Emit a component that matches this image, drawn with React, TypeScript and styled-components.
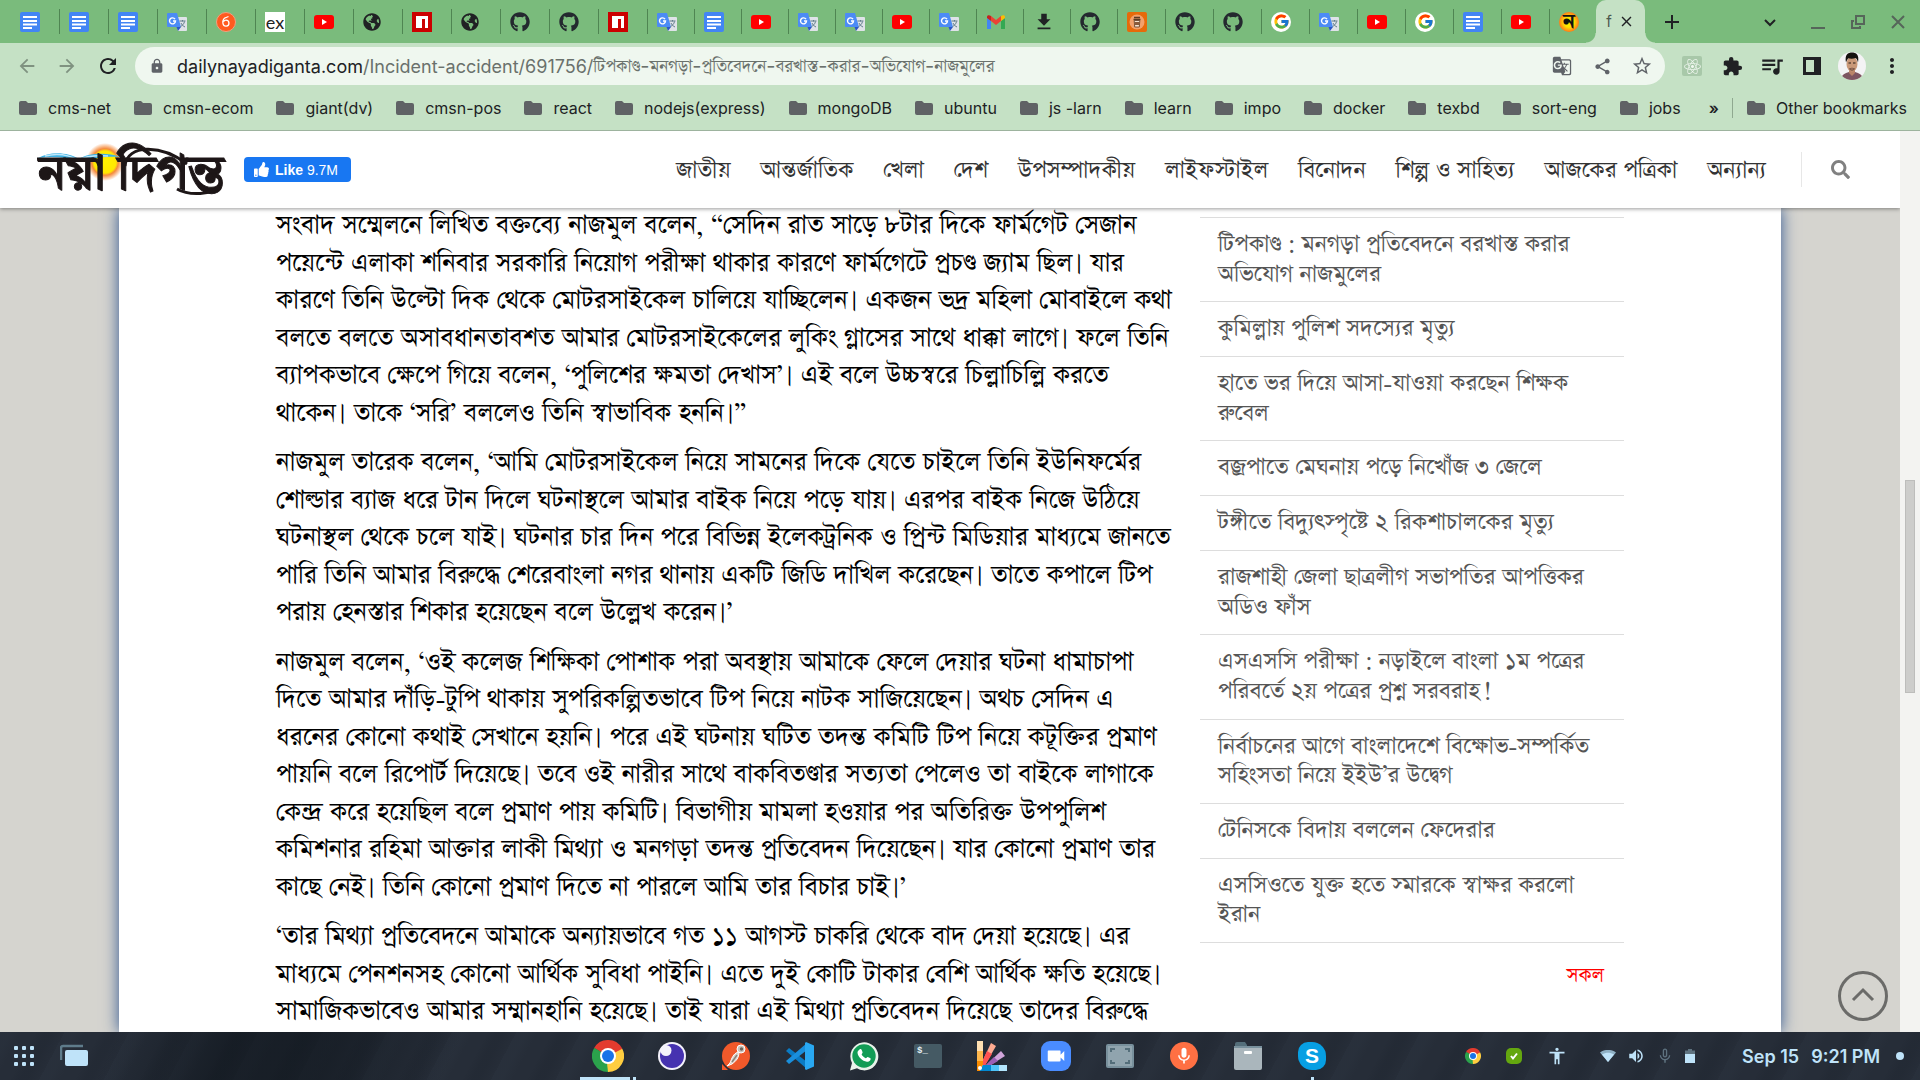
import React from 'react';
import styled, { createGlobalStyle, css } from 'styled-components';
import { FaGithub, FaGlobeAmericas, FaReact, FaSearch, FaThumbsUp } from 'react-icons/fa';
import { FcGoogle } from 'react-icons/fc';
import {
  MdAccessibility,
  MdArrowBack,
  MdArrowForward,
  MdClose,
  MdExtension,
  MdFileDownload,
  MdGTranslate,
  MdLock,
  MdMic,
  MdMicNone,
  MdMoreVert,
  MdQueueMusic,
  MdRefresh,
  MdShare,
  MdStarBorder,
  MdVideocam,
  MdVolumeUp,
} from 'react-icons/md';

const ui = `Inter, "Liberation Sans", sans-serif`;
const bangla = `FreeSerif, "Noto Serif Bengali", "Noto Sans Bengali", "Liberation Serif", serif`;

const GlobalStyle = createGlobalStyle`
  * { box-sizing: border-box; }
  body { margin: 0; background: #d5d4cf; overflow: hidden; }
  button { border: 0; padding: 0; background: none; color: inherit; font: inherit; cursor: pointer; }
  a { color: inherit; text-decoration: none; }
  svg { display: block; flex: none; }
`;

const Desktop = styled.div`
  display: flex;
  flex-direction: column;
  height: 100vh;
  font-family: ${ui};
`;

/* ---------- browser tabs ---------- */

const TabStrip = styled.div`
  display: flex;
  align-items: stretch;
  height: 43px;
  flex: none;
  padding-left: 11px;
  background: #7abb7c;
`;

const Tab = styled.button<{ $width: number; $last?: boolean }>`
  display: flex;
  align-items: center;
  flex: 0 1 ${(p) => p.$width}px;
  min-width: 0;
  padding-left: 9px;
  ${(p) =>
    !p.$last &&
    css`
      background: linear-gradient(#4f8552, #4f8552) right center / 1px 25px no-repeat;
    `}
`;

const ActiveTab = styled.div`
  position: relative;
  display: flex;
  align-items: center;
  justify-content: center;
  gap: 6px;
  width: 49px;
  flex: none;
  border-radius: 10px 10px 0 0;
  background: #c5e1c5;
  color: #202124;
  font-size: 15px;

  &::before,
  &::after {
    content: '';
    position: absolute;
    bottom: 0;
    width: 10px;
    height: 10px;
  }
  &::before {
    right: 100%;
    background: radial-gradient(circle at 0 0, transparent 9px, #c5e1c5 10px);
  }
  &::after {
    left: 100%;
    background: radial-gradient(circle at 100% 0, transparent 9px, #c5e1c5 10px);
  }
`;

const TabTitle = styled.span`
  color: #4d5a4f;
`;

const NewTab = styled.button`
  display: flex;
  align-items: center;
  margin-left: 18px;
`;

const WindowControls = styled.div`
  display: flex;
  align-items: center;
  gap: 24px;
  margin-left: auto;
  padding-right: 14px;
`;

const WindowButton = styled.button<{ $dark?: boolean }>`
  display: flex;
  margin-right: ${(p) => (p.$dark ? '8px' : '0')};
  color: ${(p) => (p.$dark ? '#202124' : '#56655a')};
`;

/* ---------- toolbar ---------- */

const Toolbar = styled.div`
  display: flex;
  align-items: center;
  flex: none;
  height: 47px;
  padding: 4px 8px 5px 16px;
  background: #c5e1c5;
  color: #202124;
`;

const NavButtons = styled.div`
  display: flex;
  align-items: center;
  gap: 18px;
  width: 119px;
`;

const IconButton = styled.button<{ $dim?: boolean }>`
  display: flex;
  color: ${(p) => (p.$dim ? '#7f9280' : 'inherit')};
`;

const AddressBar = styled.div`
  display: flex;
  align-items: center;
  flex: 1;
  min-width: 0;
  height: 38px;
  padding: 0 3px 0 14px;
  border-radius: 19px;
  background: #eff7ef;
  color: #5f6368;
`;

const Address = styled.div`
  flex: 1;
  min-width: 0;
  margin-left: 12px;
  overflow: hidden;
  white-space: nowrap;
  font-size: 18px;
  line-height: 36px;
  font-family: Inter, ${bangla};
  color: #6a716c;

  b {
    font-weight: 400;
    color: #202124;
  }
`;

const Slug = styled.span`
  font-size: 20px;
`;

const IconCells = styled.div`
  display: grid;
  grid-auto-flow: column;
  grid-auto-columns: 40px;
  place-items: center;
`;

const Extensions = styled(IconCells)`
  margin-left: 7px;
`;

const ReactBadge = styled.span`
  display: grid;
  place-items: center;
  width: 20px;
  height: 20px;
  border-radius: 2px;
  background: #a8c8a9;
  color: #eff7ef;
`;

/* ---------- bookmarks ---------- */

const Bookmarks = styled.nav`
  display: flex;
  align-items: center;
  flex: none;
  height: 41px;
  padding: 0 13px 4px 19px;
  border-bottom: 1px solid #9db39e;
  background: #c5e1c5;
  color: #202124;
  font-size: 16px;
  line-height: 20px;
  white-space: nowrap;
`;

const BookmarkList = styled.div`
  display: flex;
  gap: 23px;
  flex: 1;
  min-width: 0;
  overflow: hidden;
`;

const Bookmark = styled.a`
  display: flex;
  align-items: center;
  gap: 11px;

  svg {
    color: #5f6265;
  }
`;

const Overflow = styled.button`
  margin-right: 13px;
  font-weight: 600;
`;

const OtherBookmarks = styled.div`
  padding-left: 14px;
  border-left: 1px solid #8fa890;
`;

/* ---------- web page ---------- */

const Viewport = styled.div`
  display: flex;
  flex: 1;
  min-height: 0;
`;

const Page = styled.div`
  position: relative;
  display: flex;
  flex-direction: column;
  flex: 1;
  min-width: 0;
  overflow: hidden;
  background: #d5d4cf;
  font-family: ${bangla};
`;

const SiteHeader = styled.header`
  position: relative;
  z-index: 1;
  display: flex;
  align-items: center;
  flex: none;
  height: 77px;
  padding: 0 50px 0 37px;
  background: #fff;
  box-shadow: 0 1px 4px rgba(0, 0, 0, 0.4);
`;

const LikeButton = styled.button`
  display: flex;
  align-items: center;
  gap: 6px;
  height: 25px;
  margin-left: 17px;
  padding: 0 13px 0 10px;
  border-radius: 4px;
  background: #1877f2;
  color: #fff;
  font-family: 'Liberation Sans', Arial, sans-serif;
  font-size: 14px;
`;

const SiteNav = styled.nav`
  display: flex;
  gap: 30px;
  margin-left: auto;
  padding-top: 3px;
  color: #333;
  font-size: 27px;
  line-height: 32px;
  white-space: nowrap;
`;

const SearchBox = styled.div`
  margin-left: 35px;
  padding: 8px 0 8px 29px;
  border-left: 1px solid #e7e7e7;
  color: #808080;
`;

const Sheet = styled.div`
  flex: 1;
  min-height: 0;
  width: 87.5%;
  margin: 0 auto;
  background: #fff;
  box-shadow: 0 0 15px #2f5590;
`;

const Columns = styled.div`
  display: grid;
  grid-template-columns: minmax(0, 2fr) minmax(0, 1fr);
  max-width: 1380px;
  margin: 0 auto;
`;

const Article = styled.article`
  padding: 0 16px;
  color: #000;
  font-size: 30px;
  line-height: 1.25;
  white-space: nowrap;

  p {
    margin: 0 0 12px;
  }
`;

const Sidebar = styled.aside`
  padding: 9px 16px 0 20px;
`;

const Headlines = styled.ul`
  margin: 0;
  padding: 0;
  list-style: none;
  border-top: 1px solid #ddd;
  color: #555;
  font-size: 27px;
  line-height: 1.1;
  white-space: nowrap;
`;

const Headline = styled.li`
  padding: 12px 18px;
  border-bottom: 1px solid #ddd;

  a {
    display: block;
  }
`;

const AllLink = styled.a`
  display: block;
  padding: 18px 20px;
  color: #f00;
  font-size: 23px;
  line-height: 32px;
  text-align: right;
`;

const BackToTop = styled.button`
  position: absolute;
  right: 12px;
  bottom: 11px;
  display: grid;
  place-items: center;
  width: 50px;
  height: 50px;
  border: 3px solid #6b6b69;
  border-radius: 50%;
  color: #6b6b69;
`;

const Scrollbar = styled.div`
  flex: none;
  width: 20px;
  padding: 349px 5px 0;
  background: #f3f3f1;
`;

const Thumb = styled.div`
  height: 213px;
  border: 1px solid #bdbdbb;
  background: #cdcdcb;
`;

/* ---------- desktop panel ---------- */

const Panel = styled.footer`
  display: grid;
  grid-template-columns: 1fr auto 1fr;
  align-items: center;
  flex: none;
  height: 48px;
  padding: 0 12px;
  background:
    linear-gradient(115deg, transparent 6%, rgba(10, 16, 22, 0.5) 12%, rgba(10, 16, 22, 0.5) 17%, transparent 24%),
    repeating-linear-gradient(118deg, rgba(60, 72, 86, 0.1) 0 9px, transparent 19px 31px, rgba(12, 18, 26, 0.1) 40px 46px, transparent 57px),
    #262d38;
  color: #bfe3f9;
`;

const PanelGroup = styled.div<{ $gap: number; $end?: boolean }>`
  display: flex;
  align-items: center;
  gap: ${(p) => p.$gap}px;
  justify-content: ${(p) => (p.$end ? 'flex-end' : 'flex-start')};
`;

const Launcher = styled.button<{ $mark?: 'bar' | 'dot' }>`
  display: grid;
  place-items: center;
  width: 64px;
  height: 48px;
  ${(p) =>
    p.$mark === 'bar' &&
    css`
      background:
        linear-gradient(#bfe3f9, #bfe3f9) 4px 100% / 50px 3px no-repeat,
        linear-gradient(#bfe3f9, #bfe3f9) 57px 100% / 3px 3px no-repeat;
    `}
  ${(p) =>
    p.$mark === 'dot' &&
    css`
      background: linear-gradient(#bfe3f9, #bfe3f9) center 100% / 3px 3px no-repeat;
    `}
`;

const Clock = styled.time`
  display: flex;
  gap: 12px;
  font-size: 18px;
  font-weight: 600;
  white-space: nowrap;
`;

const Notice = styled.span`
  width: 8px;
  height: 8px;
  margin: 0 4px 0 16px;
  border-radius: 50%;
  background: #bfe3f9;
`;

const StatusIcons = styled.span`
  display: flex;
  align-items: center;
  gap: 11px;
  margin: 0 47px 0 33px;
`;

const TrayApps = styled.span`
  display: flex;
  align-items: center;
  gap: 25px;
`;

/* ---------- drawings ---------- */

const Docs = () => (
  <svg width="20" height="20" viewBox="0 0 20 20">
    <rect width="20" height="20" rx="2" fill="#4285f4" />
    <path d="M3 5h14M3 9h14M3 12.500h14M3 16h9" stroke="#fff" strokeWidth="1.900" />
  </svg>
);

const Translate = () => (
  <svg width="20" height="20" viewBox="0 0 20 20">
    <path d="M8 5h11a1 1 0 0 1 1 1v12a1 1 0 0 1-1 1h-8z" fill="#dfe3e8" />
    <path d="M1 1h9l4 14H1a1 1 0 0 1-1-1V2a1 1 0 0 1 1-1z" fill="#4c8bf5" />
    <path d="M9.500 15H14l-3 4z" fill="#2a56c6" />
    <path d="M8 7.200A3 3 0 1 0 8.500 9H6" fill="none" stroke="#fff" strokeWidth="1.400" />
    <path d="M12.500 9h6M15.500 8v1.500M17.500 9.500c-.5 2.500-2 4-4 5M14 11c.8 1.800 2 3 4 4" fill="none" stroke="#607d8b" strokeWidth="1" />
  </svg>
);

const YouTube = () => (
  <svg width="20" height="20" viewBox="0 0 20 20">
    <rect y="3" width="20" height="14" rx="3" fill="#f00" />
    <path d="M8 7v6l5-3z" fill="#fff" />
  </svg>
);

const OrangeSix = () => (
  <svg width="20" height="20" viewBox="0 0 20 20">
    <circle cx="10" cy="10" r="9.500" fill="#ff5a1f" stroke="#f0a080" />
    <path d="M9.500 5.500C7 7 6.500 9.500 7 11.700a3 3 0 1 0 3-3.500c-1 0-2 .6-2.500 1.500M9 6l3.500-1.500" fill="none" stroke="#fff" strokeWidth="1.300" />
  </svg>
);

const ExpressBox = styled.span`
  display: grid;
  place-items: center;
  width: 20px;
  height: 20px;
  background: #fff;
  color: #222;
  font: 400 18px/18px Lato, sans-serif;
`;

const Npm = () => (
  <svg width="20" height="20" viewBox="0 0 20 20">
    <path d="M0 0h20v20H0z" fill="#c00" />
    <path d="M4 4h12v12h-3V7h-3v9H4z" fill="#fff" />
  </svg>
);

const Gmail = () => (
  <svg width="20" height="20" viewBox="0 0 20 20">
    <path d="M1 17V6l4 3v8z" fill="#4285f4" />
    <path d="M15 17V9l4-3v11z" fill="#34a853" />
    <path d="M5 9V4l5 4 5-4v5l-5 4z" fill="#ea4335" />
    <path d="M1 6V5c0-2 2-2.500 4-1v5z" fill="#c5221f" />
    <path d="M19 6V5c0-2-2-2.500-4-1v5z" fill="#fbbc04" />
  </svg>
);

const Coffee = () => (
  <svg width="20" height="20" viewBox="0 0 20 20">
    <rect width="20" height="20" rx="2" fill="#e66a0a" />
    <circle cx="10" cy="10" r="7.500" fill="#f3a06b" />
    <path d="M7 5.500h6M6.500 7.500h7" stroke="#5b3a24" strokeWidth="1.300" />
    <path d="M7.200 8.500h5.600L12.300 15H7.700z" fill="#f6e3d2" stroke="#5b3a24" strokeWidth=".8" />
    <path d="M7.600 10h4.800v3H7.600z" fill="#8b5a3a" />
  </svg>
);

const GoogleDisc = styled.span`
  display: grid;
  place-items: center;
  width: 20px;
  height: 20px;
  border-radius: 50%;
  background: #fff;
`;

const SiteIcon = styled.span`
  display: grid;
  place-items: center;
  width: 20px;
  height: 20px;
  border-radius: 50%;
  background: radial-gradient(circle, #ffe600 35%, #ff7a1a 70%);
  color: #111;
  font: 900 20px/20px ${bangla};
`;

const Logo = () => (
  <svg width="190" height="76" viewBox="0 0 190 76" role="img" aria-label="নয়া দিগন্ত">
    <defs>
      <radialGradient id="sun">
        <stop offset="0" stopColor="#fff200" />
        <stop offset="0.580" stopColor="#ffe800" />
        <stop offset="0.700" stopColor="#f58a3c" />
        <stop offset="1" stopColor="#f58a3c" stopOpacity="0" />
      </radialGradient>
    </defs>
    <circle cx="68" cy="30" r="19" fill="url(#sun)" />
    <path d="M1 26c12-7 30-6 41 1 9-6 27-7 42-2-14-1-31 1-42 5-12-5-26-6-41-4z" fill="#3fb2e3" />
    <path d="M8 24c12-3 24-1 33 4 8-4 18-5 30-4" fill="none" stroke="#bfe8fa" strokeWidth="1.500" />
    <text
      x="1"
      y="57"
      fontSize="49"
      fontWeight="700"
      fontFamily={bangla}
      fill="#1d1617"
      stroke="#1d1617"
      strokeWidth="1"
    >
      নয়া দিগন্ত
    </text>
    <path d="M88 34C90 12 124 12 150 32" fill="none" stroke="#1d1617" strokeWidth="3" />
    <path d="M140 57c12 7 36 6 42-3" fill="none" stroke="#1d1617" strokeWidth="3" />
  </svg>
);

const Avatar = () => (
  <svg width="28" height="28" viewBox="0 0 28 28">
    <clipPath id="face">
      <circle cx="14" cy="14" r="14" />
    </clipPath>
    <g clipPath="url(#face)">
      <path d="M0 0h28v28H0z" fill="#f4f3f5" />
      <path d="M3 28c0-5 4-7 8-8h6c4 1 8 3 8 8z" fill="#7d5561" />
      <path d="M11 17h6v4l-3 3-3-3z" fill="#b98468" />
      <ellipse cx="14" cy="12" rx="5.500" ry="7.500" fill="#c99878" />
      <path d="M8 10.500c-1.500-8 2-10 6-10s7.500 2 6 10c-.8-3-1.500-4-2.500-4.500-2 .8-5 .8-7 .3-1 .7-1.500 1.700-2.500 4.200z" fill="#15120f" />
      <path d="M11 16.500c1 3 5 3 6 0-1.500-1-4.500-1-6 0z" fill="#6d4e40" />
      <path d="M12.500 17h3" stroke="#b9826a" />
      <path d="M10.500 11h2.500M15 11h2.500" stroke="#2a1c16" />
    </g>
  </svg>
);

const AppGrid = () => (
  <svg width="24" height="24" viewBox="0 0 24 24" fill="#bfe3f9">
    {[2, 10, 18].map((y) => [2, 10, 18].map((x) => <rect key={`${x}-${y}`} x={x} y={y} width="4" height="4" rx="1" />))}
  </svg>
);

const Windows = () => (
  <svg width="28" height="24" viewBox="0 0 28 24">
    <path d="M1 16V4q0-2 2-2h20" fill="none" stroke="#5f7c8b" strokeWidth="2.500" />
    <rect x="5" y="6" width="23" height="16" rx="2" fill="#bfe3f9" />
  </svg>
);

const Chrome = ({ size }: { size: number }) => (
  <svg width={size} height={size} viewBox="0 0 32 32">
    <path d="M16 16 2.140 8A16 16 0 0 1 29.860 8z" fill="#e33b2e" />
    <path d="M16 16 29.860 8A16 16 0 0 1 16 32z" fill="#ffcd40" />
    <path d="M16 16v16A16 16 0 0 1 2.140 8z" fill="#2ba24c" />
    <path d="M16 8h13.900v1L16 16z" fill="#e33b2e" />
    <path d="m9 20-6.900-12L9 12z" fill="#2ba24c" />
    <path d="m23 20-7 12-1-9z" fill="#ffcd40" />
    <circle cx="16" cy="16" r="8" fill="#fff" />
    <circle cx="16" cy="16" r="6" fill="#1a73e8" />
  </svg>
);

const Insomnia = () => (
  <svg width="28" height="28" viewBox="0 0 28 28">
    <circle cx="14" cy="14" r="14" fill="#f4f2fb" />
    <circle cx="14" cy="14" r="12" fill="#4632b0" />
    <circle cx="8" cy="8.500" r="5.500" fill="#f4f2fb" />
  </svg>
);

const Postman = () => (
  <svg width="30" height="30" viewBox="0 0 30 30">
    <circle cx="15" cy="15" r="14" fill="#f1592a" />
    <path d="M1 29v-6l6 6z" fill="#f1592a" />
    <circle cx="20" cy="8" r="4" fill="#c9c4bd" stroke="#fff" />
    <circle cx="20.500" cy="8" r="1.700" fill="#6b6259" />
    <path d="M17 11c-5 2-6 6-8 11l-3 3 5-2c4-3 7-6 7-12z" fill="#d9d4cc" stroke="#fff" />
    <path d="m16 14-5 7" stroke="#8b8278" strokeWidth="1.500" />
  </svg>
);

const Code = () => (
  <svg width="28" height="28" viewBox="0 0 28 28">
    <path d="m0 9 3-3 18 14v7z" fill="#0a7bc4" />
    <path d="m0 19 3 3L21 8V1z" fill="#1a8fdc" />
    <path d="m20 0 8 3.500v21L20 28l-1-1V1z" fill="#29a8f2" />
  </svg>
);

const WhatsApp = () => (
  <svg width="30" height="30" viewBox="0 0 30 30">
    <path d="M1 29.500 3 22A14 14 0 1 1 8 27.300z" fill="#e9f2ea" />
    <circle cx="15" cy="15" r="11.700" fill="#129c55" />
    <path
      d="M10.500 8.500c1-.7 1.800-.5 2.200.5l.9 2.200c.2.700-1 1.700-1 2.100.5 1.500 2.500 3.300 4.200 3.900.5 0 1.300-1.500 2-1.300l2.200 1.100c.8.400.8 1 .4 2-.7 1.300-2.200 2-3.600 1.800-4.300-.6-9-5-9.300-9-.1-1.300.9-2.600 2-3.300z"
      fill="#fff"
    />
  </svg>
);

const Terminal = styled.span`
  width: 28px;
  height: 24px;
  padding: 3px;
  border-radius: 2px;
  background: #455a64;
  color: #e3eef3;
  font: bold 9px/9px 'Liberation Mono', monospace;
  text-align: left;
`;

const Palette = () => (
  <svg width="30" height="30" viewBox="0 0 30 30">
    <path d="M0 0h6v30H0z" fill="#ffe0b2" />
    <path d="M0 10h6v20H0z" fill="#ffb74d" />
    <path d="M0 20h6v10H0z" fill="#fb8c00" />
    <path d="m14 2 5 3L7 26H6v-7z" fill="#ffab91" />
    <path d="m10 10 5 3L7 26H6v-7z" fill="#ff5252" />
    <path d="m24 10 4 5L9 27l-2-1z" fill="#d1a5da" />
    <path d="m17 16 4 4L9 27l-2-1z" fill="#9c5fb5" />
    <path d="M6 24h24v6H3z" fill="#b3e5fc" />
    <path d="M6 24h16v6H3z" fill="#4fc3f7" />
    <path d="M6 24h8v6H3z" fill="#0288d1" />
    <circle cx="3" cy="27" r="2" fill="#fff" />
  </svg>
);

const Tile = styled.span<{ $color: string; $round?: boolean }>`
  display: grid;
  place-items: center;
  width: ${(p) => (p.$round ? '28px' : '30px')};
  height: ${(p) => (p.$round ? '28px' : '30px')};
  border-radius: ${(p) => (p.$round ? '50%' : '9px')};
  background: ${(p) => p.$color};
  color: #fff;
`;

const Capture = () => (
  <svg width="28" height="24" viewBox="0 0 28 24">
    <rect width="28" height="24" rx="2" fill="#78909c" />
    <rect x="2" y="2" width="24" height="20" fill="#90a4ae" />
    <path d="M5 8V5h4M19 5h4v3M23 16v3h-4M9 19H5v-3" fill="none" stroke="#546e7a" strokeWidth="2" />
  </svg>
);

const Files = () => (
  <svg width="28" height="28" viewBox="0 0 28 28">
    <path d="M1 8V2q0-2 2-2h8l2 3v6z" fill="#546e7a" />
    <rect y="4" width="28" height="24" rx="2" fill="#aab6bc" />
    <path d="M0 4h28v2H0z" fill="#78909c" />
    <rect x="10" y="9" width="8" height="3" rx="1" fill="#fff" />
  </svg>
);

const SkypeMark = styled.span`
  display: grid;
  place-items: center;
  width: 28px;
  height: 28px;
  border-radius: 10px 14px 10px 14px;
  background: #079fe3;
  color: #fff;
  font: bold 21px/24px 'Liberation Sans', sans-serif;
`;

const GreenCheck = () => (
  <svg width="16" height="16" viewBox="0 0 16 16">
    <rect width="16" height="16" rx="5" fill="#64a70f" />
    <path d="m5 8 2 2.500 4-5" fill="none" stroke="#fff" strokeWidth="2" />
  </svg>
);

const Wifi = () => (
  <svg width="16" height="12" viewBox="0 0 16 12">
    <path d="M0 2.500C5-1 11-1 16 2.500L8 12z" fill="#8fb0c4" />
    <path d="M2 4.500c4-2.500 8-2.500 12 0L8 12z" fill="#bfe3f9" />
  </svg>
);

const Battery = () => (
  <svg width="10" height="14" viewBox="0 0 10 14">
    <path d="M3 0h4v1.500h3V14H0V1.500h3z" fill="#5f7380" />
    <path d="M0 5h10v9H0z" fill="#bfe3f9" />
  </svg>
);

const Folder = () => (
  <svg width="18" height="16" viewBox="0 0 18 16">
    <path d="M2 1h5l2 2h7q2 0 2 2v8q0 2-2 2H2q-2 0-2-2V3q0-2 2-2z" fill="currentColor" />
  </svg>
);

/* ---------- content ---------- */

const google = <GoogleDisc><FcGoogle size={17} /></GoogleDisc>;
const github = <FaGithub size={20} color="#24292f" />;
const globe = <FaGlobeAmericas size={18} color="#202124" />;

const tabs: [string, React.ReactNode][] = [
  ['Docs', <Docs />],
  ['Docs', <Docs />],
  ['Docs', <Docs />],
  ['Translate', <Translate />],
  ['Course', <OrangeSix />],
  ['Express', <ExpressBox>ex</ExpressBox>],
  ['YouTube', <YouTube />],
  ['Site', globe],
  ['npm', <Npm />],
  ['Site', globe],
  ['GitHub', github],
  ['GitHub', github],
  ['npm', <Npm />],
  ['Translate', <Translate />],
  ['Docs', <Docs />],
  ['YouTube', <YouTube />],
  ['Translate', <Translate />],
  ['Translate', <Translate />],
  ['YouTube', <YouTube />],
  ['Translate', <Translate />],
  ['Gmail', <Gmail />],
  ['Downloads', <MdFileDownload size={22} color="#202124" />],
  ['GitHub', github],
  ['Coffee', <Coffee />],
  ['GitHub', github],
  ['GitHub', github],
  ['Google', google],
  ['Translate', <Translate />],
  ['YouTube', <YouTube />],
  ['Google', google],
  ['Docs', <Docs />],
  ['YouTube', <YouTube />],
  ['Naya Diganta', <SiteIcon>ন</SiteIcon>],
];

const tabWidth = (i: number) => {
  if (i === tabs.length - 1) return 46;
  if (i < 13) return 49;
  return i < 23 ? 47 : 48;
};

const bookmarks = [
  'cms-net', 'cmsn-ecom', 'giant(dv)', 'cmsn-pos', 'react', 'nodejs(express)', 'mongoDB',
  'ubuntu', 'js -larn', 'learn', 'impo', 'docker', 'texbd', 'sort-eng', 'jobs',
];

const sections = [
  'জাতীয়', 'আন্তর্জাতিক', 'খেলা', 'দেশ', 'উপসম্পাদকীয়', 'লাইফস্টাইল', 'বিনোদন',
  'শিল্প ও সাহিত্য', 'আজকের পত্রিকা', 'অন্যান্য',
];

const paragraphs = [
  [
    'সংবাদ সম্মেলনে লিখিত বক্তব্যে নাজমুল বলেন, “সেদিন রাত সাড়ে ৮টার দিকে ফার্মগেট সেজান',
    'পয়েন্টে এলাকা শনিবার সরকারি নিয়োগ পরীক্ষা থাকার কারণে ফার্মগেটে প্রচণ্ড জ্যাম ছিল। যার',
    'কারণে তিনি উল্টো দিক থেকে মোটরসাইকেল চালিয়ে যাচ্ছিলেন। একজন ভদ্র মহিলা মোবাইলে কথা',
    'বলতে বলতে অসাবধানতাবশত আমার মোটরসাইকেলের লুকিং গ্লাসের সাথে ধাক্কা লাগে। ফলে তিনি',
    'ব্যাপকভাবে ক্ষেপে গিয়ে বলেন, ‘পুলিশের ক্ষমতা দেখাস’। এই বলে উচ্চস্বরে চিল্লাচিল্লি করতে',
    'থাকেন। তাকে ‘সরি’ বললেও তিনি স্বাভাবিক হননি।”',
  ],
  [
    'নাজমুল তারেক বলেন, ‘আমি মোটরসাইকেল নিয়ে সামনের দিকে যেতে চাইলে তিনি ইউনিফর্মের',
    'শোল্ডার ব্যাজ ধরে টান দিলে ঘটনাস্থলে আমার বাইক নিয়ে পড়ে যায়। এরপর বাইক নিজে উঠিয়ে',
    'ঘটনাস্থল থেকে চলে যাই। ঘটনার চার দিন পরে বিভিন্ন ইলেকট্রনিক ও প্রিন্ট মিডিয়ার মাধ্যমে জানতে',
    'পারি তিনি আমার বিরুদ্ধে শেরেবাংলা নগর থানায় একটি জিডি দাখিল করেছেন। তাতে কপালে টিপ',
    'পরায় হেনস্তার শিকার হয়েছেন বলে উল্লেখ করেন।’',
  ],
  [
    'নাজমুল বলেন, ‘ওই কলেজ শিক্ষিকা পোশাক পরা অবস্থায় আমাকে ফেলে দেয়ার ঘটনা ধামাচাপা',
    'দিতে আমার দাঁড়ি-টুপি থাকায় সুপরিকল্পিতভাবে টিপ নিয়ে নাটক সাজিয়েছেন। অথচ সেদিন এ',
    'ধরনের কোনো কথাই সেখানে হয়নি। পরে এই ঘটনায় ঘটিত তদন্ত কমিটি টিপ নিয়ে কটূক্তির প্রমাণ',
    'পায়নি বলে রিপোর্ট দিয়েছে। তবে ওই নারীর সাথে বাকবিতণ্ডার সত্যতা পেলেও তা বাইকে লাগাকে',
    'কেন্দ্র করে হয়েছিল বলে প্রমাণ পায় কমিটি। বিভাগীয় মামলা হওয়ার পর অতিরিক্ত উপপুলিশ',
    'কমিশনার রহিমা আক্তার লাকী মিথ্যা ও মনগড়া তদন্ত প্রতিবেদন দিয়েছেন। যার কোনো প্রমাণ তার',
    'কাছে নেই। তিনি কোনো প্রমাণ দিতে না পারলে আমি তার বিচার চাই।’',
  ],
  [
    '‘তার মিথ্যা প্রতিবেদনে আমাকে অন্যায়ভাবে গত ১১ আগস্ট চাকরি থেকে বাদ দেয়া হয়েছে। এর',
    'মাধ্যমে পেনশনসহ কোনো আর্থিক সুবিধা পাইনি। এতে দুই কোটি টাকার বেশি আর্থিক ক্ষতি হয়েছে।',
    'সামাজিকভাবেও আমার সম্মানহানি হয়েছে। তাই যারা এই মিথ্যা প্রতিবেদন দিয়েছে তাদের বিরুদ্ধে',
  ],
];

const headlines = [
  ['টিপকাণ্ড : মনগড়া প্রতিবেদনে বরখাস্ত করার', 'অভিযোগ নাজমুলের'],
  ['কুমিল্লায় পুলিশ সদস্যের মৃত্যু'],
  ['হাতে ভর দিয়ে আসা-যাওয়া করছেন শিক্ষক', 'রুবেল'],
  ['বজ্রপাতে মেঘনায় পড়ে নিখোঁজ ৩ জেলে'],
  ['টঙ্গীতে বিদ্যুৎস্পৃষ্টে ২ রিকশাচালকের মৃত্যু'],
  ['রাজশাহী জেলা ছাত্রলীগ সভাপতির আপত্তিকর', 'অডিও ফাঁস'],
  ['এসএসসি পরীক্ষা : নড়াইলে বাংলা ১ম পত্রের', 'পরিবর্তে ২য় পত্রের প্রশ্ন সরবরাহ!'],
  ['নির্বাচনের আগে বাংলাদেশে বিক্ষোভ-সম্পর্কিত', 'সহিংসতা নিয়ে ইইউ’র উদ্বেগ'],
  ['টেনিসকে বিদায় বললেন ফেদেরার'],
  ['এসসিওতে যুক্ত হতে স্মারকে স্বাক্ষর করলো', 'ইরান'],
];

const Lines = ({ lines }: { lines: string[] }) => (
  <>
    {lines.map((line, i) => (
      <React.Fragment key={i}>
        {i > 0 && <br />}
        {line}
      </React.Fragment>
    ))}
  </>
);

export default function App() {
  return (
    <Desktop>
      <GlobalStyle />
      <TabStrip>
        {tabs.map(([name, icon], i) => (
          <Tab key={i} aria-label={name} $width={tabWidth(i)} $last={i === tabs.length - 1}>
            {icon}
          </Tab>
        ))}
        <ActiveTab>
          <TabTitle>f</TabTitle>
          <IconButton aria-label="Close tab"><MdClose size={17} /></IconButton>
        </ActiveTab>
        <NewTab aria-label="New tab">
          <svg width="18" height="18" viewBox="0 0 18 18"><path d="M9 2v14M2 9h14" stroke="#202124" strokeWidth="2" /></svg>
        </NewTab>
        <WindowControls>
          <WindowButton $dark aria-label="Search tabs">
            <svg width="16" height="16" viewBox="0 0 16 16"><path d="m3 6 5 5 5-5" fill="none" stroke="currentColor" strokeWidth="2" /></svg>
          </WindowButton>
          <WindowButton aria-label="Minimise">
            <svg width="16" height="16" viewBox="0 0 16 16"><path d="M1 14h14" stroke="currentColor" strokeWidth="2" /></svg>
          </WindowButton>
          <WindowButton aria-label="Restore">
            <svg width="16" height="16" viewBox="0 0 16 16"><path d="M6 2h8v8H6zM4 7H2v7h8v-2" fill="none" stroke="currentColor" strokeWidth="2" /></svg>
          </WindowButton>
          <WindowButton aria-label="Close window">
            <svg width="16" height="16" viewBox="0 0 16 16"><path d="m2 2 12 12M14 2 2 14" stroke="currentColor" strokeWidth="2" /></svg>
          </WindowButton>
        </WindowControls>
      </TabStrip>

      <Toolbar>
        <NavButtons>
          <IconButton $dim aria-label="Back"><MdArrowBack size={22} /></IconButton>
          <IconButton $dim aria-label="Forward"><MdArrowForward size={22} /></IconButton>
          <IconButton aria-label="Reload"><MdRefresh size={24} /></IconButton>
        </NavButtons>
        <AddressBar>
          <MdLock size={16} />
          <Address>
            <b>dailynayadiganta.com</b>/Incident-accident/691756/<Slug>টিপকাণ্ড-মনগড়া-প্রতিবেদনে-বরখাস্ত-করার-অভিযোগ-নাজমুলের</Slug>
          </Address>
          <IconCells>
            <IconButton aria-label="Translate page"><MdGTranslate size={20} /></IconButton>
            <IconButton aria-label="Share"><MdShare size={19} /></IconButton>
            <IconButton aria-label="Bookmark page"><MdStarBorder size={22} /></IconButton>
          </IconCells>
        </AddressBar>
        <Extensions>
          <ReactBadge><FaReact size={17} /></ReactBadge>
          <IconButton aria-label="Extensions"><MdExtension size={21} /></IconButton>
          <IconButton aria-label="Media"><MdQueueMusic size={26} /></IconButton>
          <IconButton aria-label="Side panel">
            <svg width="18" height="18" viewBox="0 0 18 18"><path d="M0 0h18v18H0zM3 3v12h8V3z" fill="currentColor" fillRule="evenodd" /></svg>
          </IconButton>
          <Avatar />
          <IconButton aria-label="Menu"><MdMoreVert size={24} /></IconButton>
        </Extensions>
      </Toolbar>

      <Bookmarks>
        <BookmarkList>
          {bookmarks.map((b) => (
            <Bookmark key={b} href="#"><Folder />{b}</Bookmark>
          ))}
        </BookmarkList>
        <Overflow aria-label="More bookmarks">»</Overflow>
        <OtherBookmarks>
          <Bookmark href="#"><Folder />Other bookmarks</Bookmark>
        </OtherBookmarks>
      </Bookmarks>

      <Viewport>
        <Page>
          <SiteHeader>
            <Logo />
            <LikeButton><FaThumbsUp size={15} /><span><b>Like</b> 9.7M</span></LikeButton>
            <SiteNav>
              {sections.map((s) => <a key={s} href="#">{s}</a>)}
            </SiteNav>
            <SearchBox><IconButton aria-label="Search"><FaSearch size={19} /></IconButton></SearchBox>
          </SiteHeader>
          <Sheet>
            <Columns>
              <Article>
                {paragraphs.map((p, i) => <p key={i}><Lines lines={p} /></p>)}
              </Article>
              <Sidebar>
                <Headlines>
                  {headlines.map((h) => (
                    <Headline key={h[0]}><a href="#"><Lines lines={h} /></a></Headline>
                  ))}
                </Headlines>
                <AllLink href="#">সকল</AllLink>
              </Sidebar>
            </Columns>
          </Sheet>
          <BackToTop aria-label="Back to top">
            <svg width="24" height="24" viewBox="0 0 24 24"><path d="m2 16 10-10 10 10" fill="none" stroke="currentColor" strokeWidth="3" /></svg>
          </BackToTop>
        </Page>
        <Scrollbar><Thumb /></Scrollbar>
      </Viewport>

      <Panel>
        <PanelGroup $gap={24}>
          <IconButton aria-label="Applications"><AppGrid /></IconButton>
          <IconButton aria-label="Workspaces"><Windows /></IconButton>
        </PanelGroup>
        <PanelGroup $gap={0}>
          <Launcher aria-label="Chrome" $mark="bar"><Chrome size={32} /></Launcher>
          <Launcher aria-label="Insomnia"><Insomnia /></Launcher>
          <Launcher aria-label="Postman"><Postman /></Launcher>
          <Launcher aria-label="Code"><Code /></Launcher>
          <Launcher aria-label="WhatsApp"><WhatsApp /></Launcher>
          <Launcher aria-label="Terminal"><Terminal>$_</Terminal></Launcher>
          <Launcher aria-label="Colours"><Palette /></Launcher>
          <Launcher aria-label="Zoom"><Tile $color="#4a8cff"><MdVideocam size={22} /></Tile></Launcher>
          <Launcher aria-label="Screenshot"><Capture /></Launcher>
          <Launcher aria-label="Recorder"><Tile $color="#ff7043" $round><MdMic size={20} /></Tile></Launcher>
          <Launcher aria-label="Files"><Files /></Launcher>
          <Launcher aria-label="Skype" $mark="dot"><SkypeMark>S</SkypeMark></Launcher>
        </PanelGroup>
        <PanelGroup $gap={0} $end>
          <TrayApps>
            <Chrome size={16} />
            <GreenCheck />
            <MdAccessibility size={20} />
          </TrayApps>
          <StatusIcons>
            <Wifi />
            <MdVolumeUp size={18} />
            <MdMicNone size={18} color="#5f7380" />
            <Battery />
          </StatusIcons>
          <Clock><span>Sep 15</span><span>9:21 PM</span></Clock>
          <Notice />
        </PanelGroup>
      </Panel>
    </Desktop>
  );
}
